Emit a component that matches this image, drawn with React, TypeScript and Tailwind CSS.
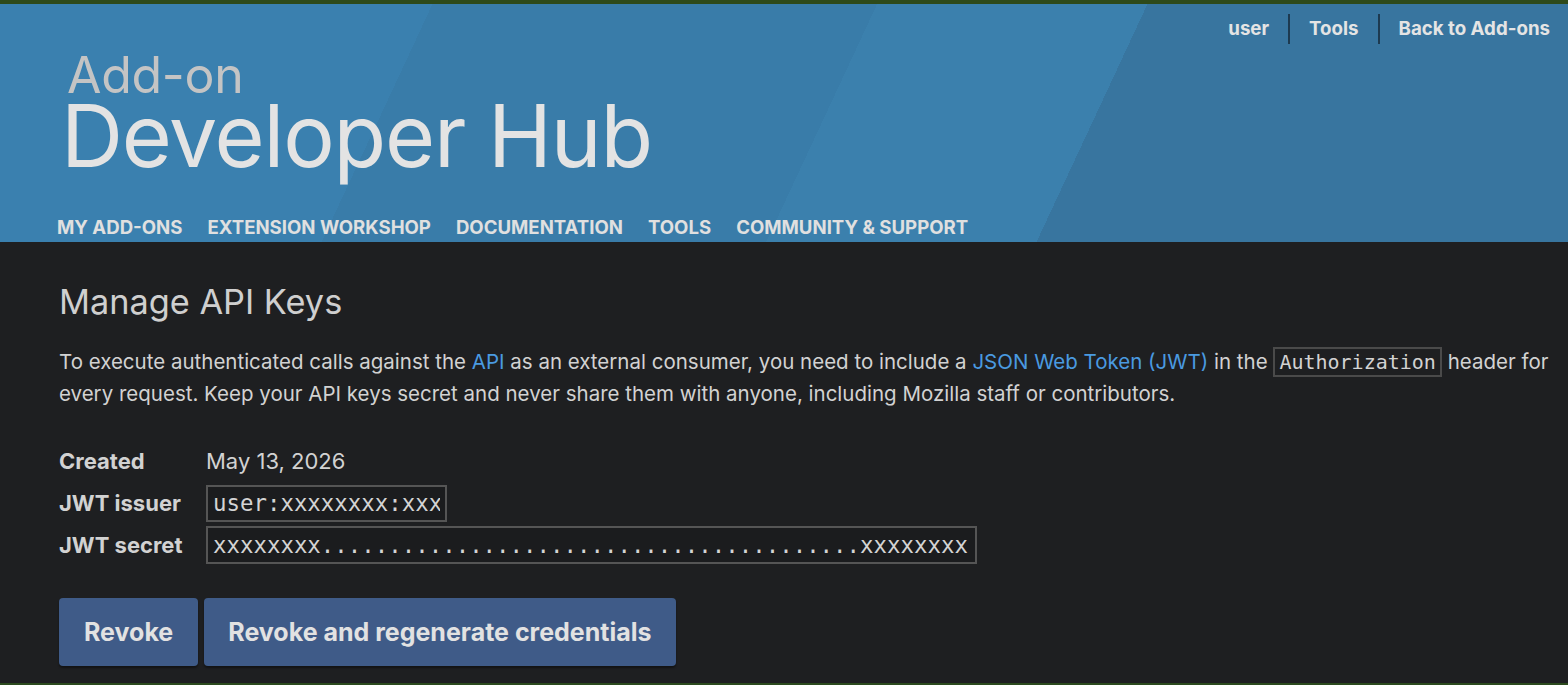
import React from 'react';

const NAV = ['My Add-ons', 'Extension Workshop', 'Documentation', 'Tools', 'Community & Support'];

const SECRET = 'xxxxxxxx' + '.'.repeat(40) + 'xxxxxxxx';

const App: React.FC = () => {
  return (
    <div className="min-h-[685px] flex flex-col bg-[#1e1f21] font-['Inter',sans-serif] border-t-4 border-b-2 border-t-[#2e4a1a] border-b-[#2c4a1e]">
      {/* Header */}
      <header className="h-[238px] flex flex-col bg-[linear-gradient(115deg,#3a80af_0px,#3a80af_392px,#397ca9_392px,#397ca9_795px,#3b80ad_795px,#3b80ad_1040px,#38759f_1040px)]">
        <div className="flex justify-end items-center pt-[10px] pr-[18px] text-[18.7px] font-bold text-[#e4e4e4]">
          <a className="px-[19px]">user</a>
          <span className="w-[2px] h-[30px] bg-[#1d3a50]" />
          <a className="px-[19px]">Tools</a>
          <span className="w-[2px] h-[30px] bg-[#1d3a50]" />
          <a className="pl-[19px]">Back to Add-ons</a>
        </div>
        <div className="pl-[61px] mt-[6px]">
          <div className="pt-[3.5px] text-[50px] leading-[43px] text-[#c4c4c4] pl-[6px] tracking-[-0.3px]">Add-on</div>
          <div className="text-[86px] leading-[78px] text-[#e3e3e3] tracking-[-1.2px]">Developer Hub</div>
        </div>
        <nav className="mt-auto pl-[57px] flex gap-[25px] text-[18.6px] font-bold uppercase text-[#e0e0e0]">
          {NAV.map((n) => (
            <a key={n}>{n}</a>
          ))}
        </nav>
      </header>

      {/* Body */}
      <main className="pl-[59px] pr-[16px] pt-[43px] text-[#d2d2d2]">
        <h1 className="text-[34.3px] text-[#cfcfcf] leading-none">Manage API Keys</h1>
        <p className="mt-[27px] text-[20.5px] leading-[32px]">
          To execute authenticated calls against the <a className="text-[#4a9ae0]">API</a> as an external consumer,
          you need to include a <a className="text-[#4a9ae0]">JSON Web Token (JWT)</a> in the{' '}
          <code className="inline-block leading-[26px] font-['DejaVu_Sans_Mono',monospace] text-[20px] border-2 border-[#4a4a4a] px-[4px]">
            Authorization
          </code>{' '}
          header for every request. Keep your API keys secret and never share them with anyone, including Mozilla staff
          or contributors.
        </p>

        <table className="mt-[30px] text-[22px]">
          <tbody>
            <tr className="h-[42px]">
              <th className="text-left font-bold pr-0 w-[147px]">Created</th>
              <td>May 13, 2026</td>
            </tr>
            <tr className="h-[42px]">
              <th className="text-left font-bold">JWT issuer</th>
              <td>
                <input
                  readOnly
                  value="user:xxxxxxxx:xxx"
                  className="w-[241px] h-[37px] px-[5px] bg-[#1b1c1e] border-2 border-[#555] font-['DejaVu_Sans_Mono',monospace] text-[22.4px] text-[#d4d4d4] outline-none"
                />
              </td>
            </tr>
            <tr className="h-[42px]">
              <th className="text-left font-bold">JWT secret</th>
              <td>
                <input
                  readOnly
                  value={SECRET}
                  className="w-[771px] h-[38px] px-[5px] bg-[#1b1c1e] border-2 border-[#555] font-['DejaVu_Sans_Mono',monospace] text-[22.4px] text-[#d4d4d4] outline-none"
                />
              </td>
            </tr>
          </tbody>
        </table>

        <div className="mt-[32px] flex gap-[6px]">
          <button className="h-[68px] px-[25px] rounded-[4px] bg-[#3f5b88] text-[25px] font-bold text-[#e2e2e2] shadow-[0_2px_2px_rgba(0,0,0,0.4)]">
            Revoke
          </button>
          <button className="h-[68px] px-[24px] rounded-[4px] bg-[#3f5b88] text-[25px] font-bold text-[#e2e2e2] shadow-[0_2px_2px_rgba(0,0,0,0.4)]">
            Revoke and regenerate credentials
          </button>
        </div>
      </main>
    </div>
  );
};

export default App;
